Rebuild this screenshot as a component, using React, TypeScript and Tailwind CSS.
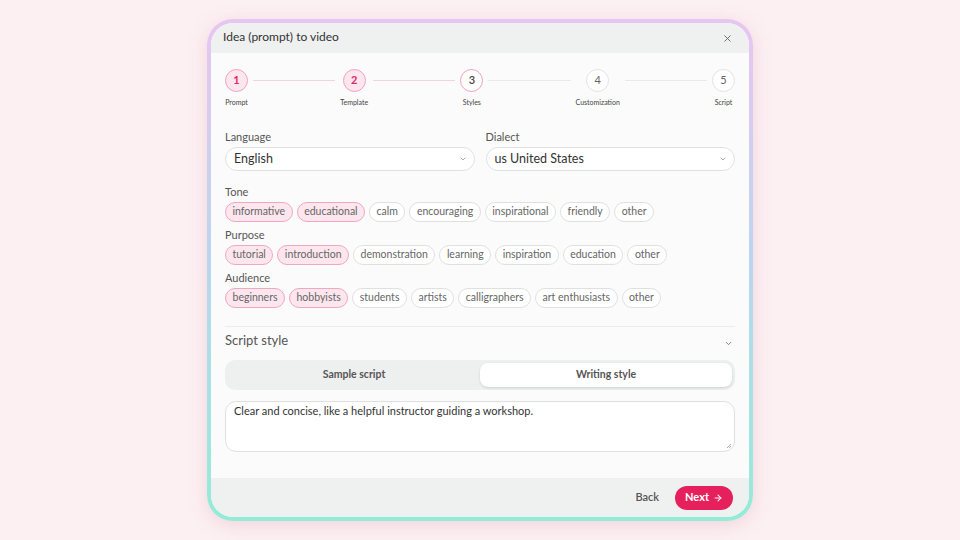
import { X, ChevronDown, ArrowRight } from "lucide-react";

const font = { fontFamily: "Lato, 'Noto Sans', sans-serif" };

const steps = [
  { n: 1, label: "Prompt", state: "done" },
  { n: 2, label: "Template", state: "done" },
  { n: 3, label: "Styles", state: "current" },
  { n: 4, label: "Customization", state: "todo" },
  { n: 5, label: "Script", state: "todo" },
];

const groups = [
  { title: "Tone", items: ["informative", "educational", "calm", "encouraging", "inspirational", "friendly", "other"], selected: 2 },
  { title: "Purpose", items: ["tutorial", "introduction", "demonstration", "learning", "inspiration", "education", "other"], selected: 2 },
  { title: "Audience", items: ["beginners", "hobbyists", "students", "artists", "calligraphers", "art enthusiasts", "other"], selected: 2 },
];

function Step({ n, label, state }: { n: number; label: string; state: string }) {
  const circle =
    state === "done"
      ? "bg-[#fde6ee] border-[#f0a3bb] text-[#e0286a] font-bold"
      : state === "current"
      ? "bg-white border-[#f0a3bb] text-[#444] font-semibold"
      : "bg-white border-[#e3e3e3] text-[#666]";
  return (
    <div className="flex flex-col items-center">
      <div className={`w-[23px] h-[23px] rounded-full border flex items-center justify-center text-[11px] ${circle}`}>{n}</div>
      <div className="mt-[6px] whitespace-nowrap text-[7px] leading-[9px] text-[#444]">{label}</div>
    </div>
  );
}

function Line({ pink }: { pink: boolean }) {
  return <div className={`flex-1 h-px mt-[11px] mx-[5px] ${pink ? "bg-[#f3d3dd]" : "bg-[#e9e9e9]"}`} />;
}

function Select({ value }: { value: string }) {
  return (
    <div className="h-[24px] rounded-full border border-[#e0e0e0] bg-white flex items-center justify-between pl-[8px] pr-[7px]">
      <span className="text-[12.5px] text-[#333]">{value}</span>
      <ChevronDown size={8} className="text-[#aaa]" strokeWidth={3} />
    </div>
  );
}

export default function App() {
  return (
    <div className="w-[960px] h-[540px] bg-[#fcf0f3] flex items-center justify-center" style={font}>
      <div className="w-[546px] h-[502px] rounded-[26px] p-[4px] bg-gradient-to-b from-[#e8c5f2] via-[#b8d6ee] to-[#92ecd6] shadow-[0_4px_18px_rgba(220,160,180,0.35)]">
        <div className="w-full h-full rounded-[22px] bg-[#fbfbfb] overflow-hidden flex flex-col">
          {/* Header */}
          <div className="h-[30px] bg-[#eff0f0] flex items-center justify-between pl-[12px] pr-[16px] shrink-0">
            <span className="text-[12px] text-[#333] mt-[-2px]">Idea (prompt) to video</span>
            <X size={11} className="text-[#666]" strokeWidth={2} />
          </div>

          <div className="flex-1 px-[14px] pt-[16px]">
            {/* Stepper */}
            <div className="flex items-start">
              <Step {...steps[0]} />
              <Line pink />
              <Step {...steps[1]} />
              <Line pink />
              <Step {...steps[2]} />
              <Line pink={false} />
              <Step {...steps[3]} />
              <Line pink={false} />
              <Step {...steps[4]} />
            </div>

            {/* Language / Dialect */}
            <div className="grid grid-cols-2 gap-[11px] mt-[23px]">
              <div>
                <div className="text-[11px] leading-[14px] text-[#555] mb-[3px]">Language</div>
                <Select value="English" />
              </div>
              <div>
                <div className="text-[11px] leading-[14px] text-[#555] mb-[3px]">Dialect</div>
                <Select value="us United States" />
              </div>
            </div>

            {/* Chip groups */}
            <div className="mt-[14px] flex flex-col gap-[6px]">
              {groups.map((g) => (
                <div key={g.title}>
                  <div className="text-[11px] text-[#555] mb-[3px] leading-[14px]">{g.title}</div>
                  <div className="flex gap-[4px]">
                    {g.items.map((it, i) => (
                      <span
                        key={it}
                        className={`h-[20px] px-[6.5px] rounded-full border text-[10.5px] flex items-center ${
                          i < g.selected ? "bg-[#fde6ee] border-[#f0a8be] text-[#666]" : "bg-white border-[#e0e0e0] text-[#666]"
                        }`}
                      >
                        {it}
                      </span>
                    ))}
                  </div>
                </div>
              ))}
            </div>

            {/* Script style */}
            <div className="mt-[18px] border-t border-[#ececec] pt-[4px]">
              <div className="flex items-center justify-between pr-[2px]">
                <span className="text-[13px] text-[#555]">Script style</span>
                <ChevronDown size={9} className="text-[#777] mt-[6px]" strokeWidth={2.5} />
              </div>
              <div className="mt-[9px] h-[30px] rounded-[10px] bg-[#eeefef] flex items-center p-[3px]">
                <div className="flex-1 text-center text-[10.5px] font-bold text-[#555]">Sample script</div>
                <div className="flex-1 h-full rounded-[8px] bg-white flex items-center justify-center text-[10.5px] font-bold text-[#555] shadow-sm">
                  Writing style
                </div>
              </div>
              <div className="mt-[11px] h-[51px] rounded-[11px] border border-[#e0e0e0] bg-white relative px-[8px] pt-[2px] text-[11px] leading-[14px] text-[#333]">
                Clear and concise, like a helpful instructor guiding a workshop.
                <svg className="absolute right-[2px] bottom-[2px]" width="6" height="6" viewBox="0 0 6 6">
                  <path d="M5 1 L1 5 M5 3 L3 5" stroke="#999" strokeWidth="0.8" />
                </svg>
              </div>
            </div>
          </div>

          {/* Footer */}
          <div className="h-[39px] bg-[#eff0f0] flex items-center justify-end gap-[16px] pr-[16px] shrink-0">
            <span className="text-[11px] font-semibold text-[#555]">Back</span>
            <div className="h-[24px] px-[10px] rounded-full bg-[#e61f5d] flex items-center gap-[4px] text-white text-[11px] font-bold">
              Next
              <ArrowRight size={10} strokeWidth={2.5} />
            </div>
          </div>
        </div>
      </div>
    </div>
  );
}
